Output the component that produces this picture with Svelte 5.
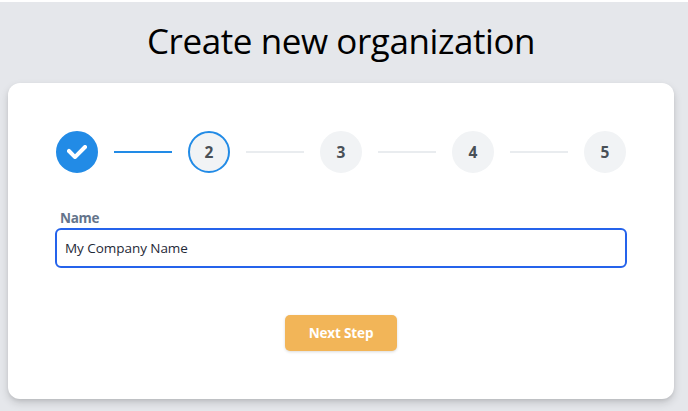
<script>
  let name = 'My Company Name';
  let active = 1;

  const steps = [1, 2, 3, 4, 5];
</script>

<main>
  <h1>Create new organization</h1>

  <section class="card">
    <div class="stepper">
      {#each steps as step, i}
        {#if i > 0}
          <div class="separator" class:done={i <= active}></div>
        {/if}
        <div class="step" class:completed={i < active} class:active={i === active}>
          {#if i < active}
            <svg viewBox="0 0 10 7" width="20" height="14">
              <path d="M4 4.586L1.707 2.293A1 1 0 1 0 .293 3.707l3 3a.997.997 0 0 0 1.414 0l5-5A1 1 0 1 0 8.293.293L4 4.586z" fill="#fff" />
            </svg>
          {:else}
            <span>{step}</span>
          {/if}
        </div>
      {/each}
    </div>

    <label for="name">Name</label>
    <input id="name" type="text" bind:value={name} />

    <button type="button">Next Step</button>
  </section>
</main>

<style>
:global(body) {
  background: #fff;
  font-family: "Open Sans", "Noto Sans", sans-serif;
}
main {
  box-sizing: border-box;
  height: 409px;
  margin-top: 2px;
  padding: 19px 14px 0 8px;
  overflow: hidden;
  background: #e5e7eb;
}
h1 {
  margin: 0 0 22px;
  font-size: 35px;
  line-height: 40px;
  font-weight: 400;
  letter-spacing: -.42px;
  text-align: center;
  color: #000;
}
.card {
  display: flex;
  flex-direction: column;
  box-sizing: border-box;
  height: 316px;
  padding: 48px;
  border-radius: 12px;
  background: #fff;
  box-shadow: 0 4px 8px rgba(0, 0, 0, .14), 0 2px 4px -1px rgba(0, 0, 0, .1);
}
.stepper {
  display: flex;
  align-items: center;
}
.step {
  display: flex;
  align-items: center;
  justify-content: center;
  box-sizing: border-box;
  width: 42px;
  height: 42px;
  border: 2px solid #f1f3f5;
  border-radius: 50%;
  background: #f1f3f5;
  color: #495057;
  font-size: 15.5px;
  line-height: 20px;
  font-weight: 700;
}
.step.active {
  border-color: #228be6;
}
.step.completed {
  border-color: #228be6;
  background: #228be6;
}
.separator {
  flex: 1;
  height: 2px;
  margin: 0 16px;
  background: #e9ecef;
}
.separator.done {
  background: #228be6;
}
label {
  margin: 35px 0 0 4px;
  font-size: 13.5px;
  line-height: 20px;
  font-weight: 700;
  letter-spacing: -.3px;
  color: #64748b;
}
input {
  box-sizing: border-box;
  height: 40px;
  margin: 0 -1px;
  padding: 0 8px 1px;
  border: 2px solid #2563eb;
  border-radius: 6px;
  outline: none;
  font: 13.5px "Open Sans", "Noto Sans", sans-serif;
  letter-spacing: -.05px;
  color: #1f2937;
}
button {
  align-self: center;
  width: 112px;
  height: 36px;
  margin-top: 47px;
  padding: 0 0 1px;
  border: 0;
  border-radius: 5px;
  background: #f2b558;
  box-shadow: 0 1px 3px rgba(0, 0, 0, .15);
  color: #fff;
  font: 700 13.5px "Open Sans", "Noto Sans", sans-serif;
  letter-spacing: -.15px;
}
</style>
